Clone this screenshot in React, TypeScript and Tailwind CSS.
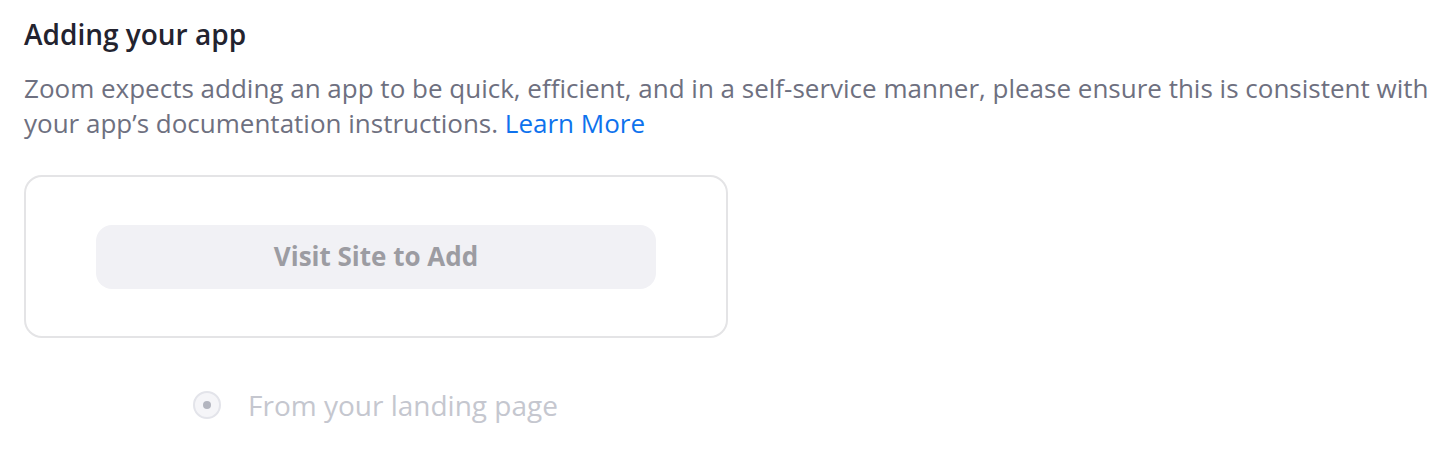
export default function App() {
  return (
    <div className="w-[1448px] h-[454px] bg-white pl-6 pt-[15px]" style={{ fontFamily: '"Open Sans", sans-serif' }}>
      <h2 className="text-[28px] leading-[38px] font-semibold text-[#23232f]">Adding your app</h2>
      <p className="mt-[18px] text-[26px] leading-[35px] text-[#6e7080] whitespace-nowrap">
        Zoom expects adding an app to be quick, efficient, and in a self-service manner, please ensure this is consistent with
        <br />
        your app’s documentation instructions. <a className="text-[#0e72ed]">Learn More</a>
      </p>
      <div className="mt-[34px] w-[704px] h-[163px] rounded-[18px] border-2 border-[#e4e4e6] flex items-center justify-center">
        <button className="w-[560px] h-[64px] rounded-[16px] bg-[#f1f1f5] text-[26px] font-bold text-[#9c9ca2]">
          Visit Site to Add
        </button>
      </div>
      <div className="mt-[48px] ml-[169px] flex items-center gap-[27px]">
        <span className="w-[28px] h-[28px] rounded-full border-2 border-[#e3e4ea] bg-[#f5f5f8] flex items-center justify-center">
          <span className="w-[8px] h-[8px] rounded-full bg-[#b3b5bf]" />
        </span>
        <span className="text-[28px] leading-[38px] text-[#c5c7cf]">From your landing page</span>
      </div>
    </div>
  );
}
